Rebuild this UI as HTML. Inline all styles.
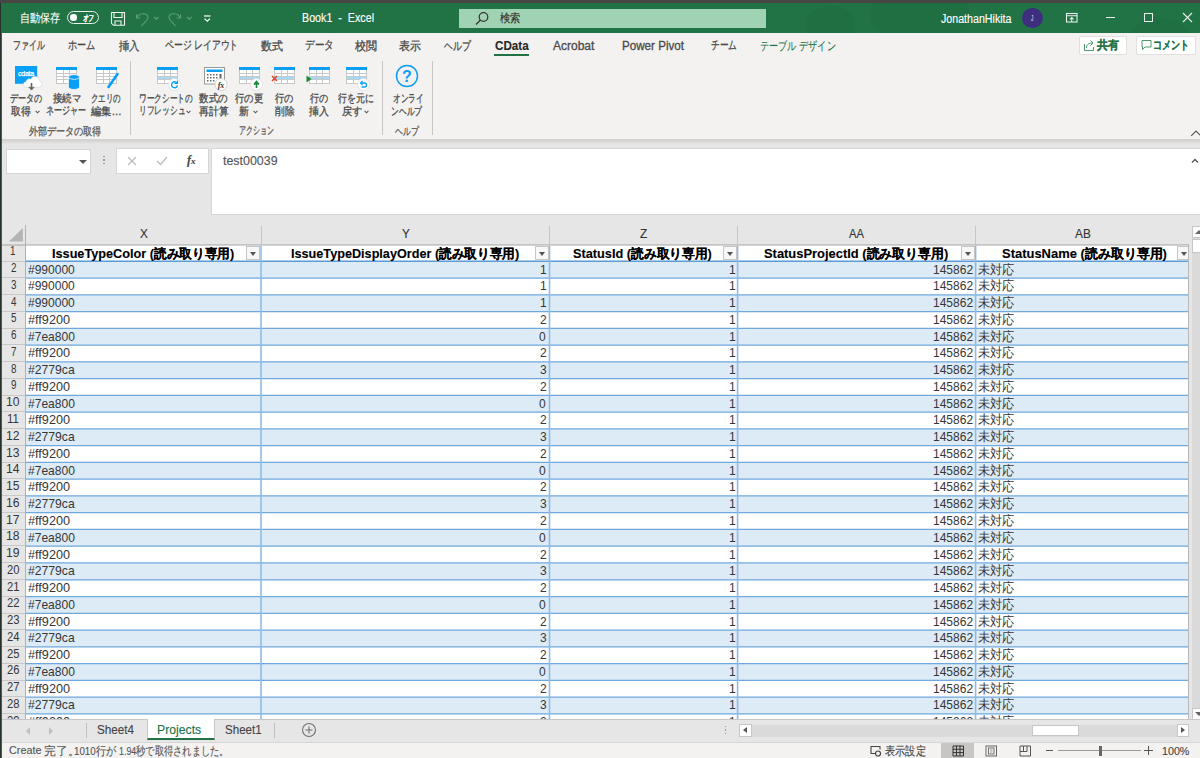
<!DOCTYPE html><html><head><meta charset="utf-8"><style>
*{box-sizing:border-box;margin:0;padding:0}
html,body{width:1200px;height:758px;overflow:hidden;background:#f3f2f1}
body{position:relative;font-family:"Liberation Sans",sans-serif;color:#262626}
.a{position:absolute;white-space:nowrap;-webkit-text-stroke:0.12px currentColor}
.sep{position:absolute;top:61px;width:1px;height:74px;background:#c8c6c4}
.dd{position:absolute;width:14px;height:14px;background:#f7f7f7;border:1px solid #c6c6c6}
.dd:after{content:"";position:absolute;left:3px;top:5px;border-left:3.5px solid transparent;border-right:3.5px solid transparent;border-top:4px solid #555}
</style></head><body>
<div class="a" style="left:0;top:3px;width:1200px;height:29.5px;background:#217346;overflow:hidden"><div class="a" style="left:805px;top:2px;width:50px;height:40px;border-radius:50%;background:rgba(0,0,0,0.03)"></div><div class="a" style="left:870px;top:-25px;width:100px;height:70px;border-radius:50%;background:rgba(0,0,0,0.03)"></div><div class="a" style="left:1130px;top:15px;width:60px;height:40px;border-radius:50%;background:rgba(0,0,0,0.03)"></div></div>
<div class="a" style="left:20.46px;top:8.85px;font-size:12px;line-height:19.20px;transform:scaleX(0.8383);transform-origin:0 0;color:#fff;">自動保存</div>
<div class="a" style="left:67.1px;top:10.9px;width:31.9px;height:13.6px;border:1.3px solid #e8f1ec;border-radius:7px"></div>
<div class="a" style="left:70.2px;top:14.1px;width:6.6px;height:6.6px;border-radius:50%;background:#fff"></div>
<div class="a" style="left:82.90px;top:11.15px;font-size:9px;line-height:14.40px;transform:scaleX(0.5842);transform-origin:0 0;color:#fff;font-style:italic;font-weight:bold">オフ</div>
<svg class="a" style="left:105px;top:6px" width="110" height="24" viewBox="0 0 110 24"><g fill="none" stroke="#eef3ef" stroke-width="1.1"><path d="M6.5 6.5H19.5V19.3H8.5L6.5 17.3Z"/><path d="M9 6.5V11.5H17V6.5M10 19.3V15H16V19.3"/></g><g fill="none" stroke="#5f9e7b" stroke-width="1.1"><path d="M31.5 8.3V12H35.3"/><path d="M31.8 11.8C33.5 7 43 6 43 11.5C43 13.5 41 15.5 36.5 19.8"/><path d="M49 11l2.25 2.25l2.25-2.25"/><path d="M75.5 8.3V12H71.7"/><path d="M75.2 11.8C73.5 7 64 6 64 11.5C64 13.5 66 15.5 70.5 19.8"/><path d="M82 11l2.25 2.25l2.25-2.25"/></g><g fill="none" stroke="#fff" stroke-width="1.2"><path d="M99 10h6.5"/><path d="M99.5 12.6l2.75 2.6l2.75-2.6"/></g></svg>
<div class="a" style="left:301.70px;top:9.45px;font-size:12px;line-height:19.20px;transform:scaleX(0.8926);transform-origin:0 0;color:#fff;">Book1&nbsp; -&nbsp; Excel</div>
<div class="a" style="left:459px;top:9px;width:307px;height:18.5px;background:#a0d2b4"></div>
<svg class="a" style="left:474px;top:11px" width="16" height="16" viewBox="0 0 16 16"><circle cx="9.5" cy="6" r="4.3" fill="none" stroke="#333" stroke-width="1.2"/><path d="M6.5 9l-4.5 4.5" stroke="#333" stroke-width="1.3"/></svg>
<div class="a" style="left:500.00px;top:8.80px;font-size:12px;line-height:19.20px;transform:scaleX(0.8542);transform-origin:0 0;color:#333;">検索</div>
<div class="a" style="left:941.00px;top:9.50px;font-size:12px;line-height:19.20px;transform:scaleX(0.8875);transform-origin:0 0;color:#fff;">JonathanHikita</div>
<div class="a" style="left:1022.2px;top:8.1px;width:20.4px;height:20.4px;border-radius:50%;background:#3d2f7e"></div>
<div class="a" style="left:1031.20px;top:11.25px;font-size:9px;line-height:14.40px;transform:scaleX(0.5200);transform-origin:0 0;color:#ddd;">J</div>
<svg class="a" style="left:1065px;top:12px" width="14" height="12" viewBox="0 0 14 12"><rect x="1.5" y="1.5" width="10.5" height="8.5" fill="none" stroke="#e8f0eb" stroke-width="1.1"/><path d="M1.5 3.8h10.5M6.75 10v-4.5M4.9 7.4l1.85-1.85 1.85 1.85" fill="none" stroke="#e8f0eb" stroke-width="1.05"/></svg>
<div class="a" style="left:1105.7px;top:17.3px;width:9.2px;height:1.1px;background:#e8f0eb"></div>
<div class="a" style="left:1144.3px;top:13.4px;width:8.8px;height:8.6px;border:1.1px solid #e8f0eb"></div>
<svg class="a" style="left:1182px;top:12px" width="11" height="11" viewBox="0 0 11 11"><path d="M1 1l9 9M10 1l-9 9" stroke="#e8f0eb" stroke-width="1.1"/></svg>
<div class="a" style="left:12.64px;top:36.05px;font-size:12px;line-height:19.20px;transform:scaleX(0.6574);transform-origin:0 0;color:#4a4a4a;-webkit-text-stroke:0.3px currentColor;">ファイル</div>
<div class="a" style="left:68.30px;top:36.05px;font-size:12px;line-height:19.20px;transform:scaleX(0.7639);transform-origin:0 0;color:#4a4a4a;-webkit-text-stroke:0.3px currentColor;">ホーム</div>
<div class="a" style="left:119.20px;top:36.55px;font-size:12px;line-height:19.20px;transform:scaleX(0.8667);transform-origin:0 0;color:#4a4a4a;-webkit-text-stroke:0.3px currentColor;">挿入</div>
<div class="a" style="left:164.50px;top:36.05px;font-size:12px;line-height:19.20px;transform:scaleX(0.7371);transform-origin:0 0;color:#4a4a4a;-webkit-text-stroke:0.3px currentColor;">ページ レイアウト</div>
<div class="a" style="left:261.00px;top:36.55px;font-size:12px;line-height:19.20px;transform:scaleX(0.9167);transform-origin:0 0;color:#4a4a4a;-webkit-text-stroke:0.3px currentColor;">数式</div>
<div class="a" style="left:305.00px;top:36.05px;font-size:12px;line-height:19.20px;transform:scaleX(0.7941);transform-origin:0 0;color:#4a4a4a;-webkit-text-stroke:0.3px currentColor;">データ</div>
<div class="a" style="left:355.00px;top:36.55px;font-size:12px;line-height:19.20px;transform:scaleX(0.9167);transform-origin:0 0;color:#4a4a4a;-webkit-text-stroke:0.3px currentColor;">校閲</div>
<div class="a" style="left:399.00px;top:36.55px;font-size:12px;line-height:19.20px;transform:scaleX(0.9167);transform-origin:0 0;color:#4a4a4a;-webkit-text-stroke:0.3px currentColor;">表示</div>
<div class="a" style="left:444.00px;top:37.05px;font-size:12px;line-height:19.20px;transform:scaleX(0.7378);transform-origin:0 0;color:#4a4a4a;-webkit-text-stroke:0.3px currentColor;">ヘルプ</div>
<div class="a" style="left:494.75px;top:37.40px;font-size:12px;line-height:19.20px;transform:scaleX(0.9700);transform-origin:0 0;color:#262626;font-weight:bold">CData</div>
<div class="a" style="left:494px;top:53.5px;width:35px;height:2.5px;background:#217346"></div>
<div class="a" style="left:553.00px;top:37.40px;font-size:12px;line-height:19.20px;color:#4a4a4a;-webkit-text-stroke:0.3px currentColor;">Acrobat</div>
<div class="a" style="left:622.00px;top:37.40px;font-size:12px;line-height:19.20px;transform:scaleX(0.9692);transform-origin:0 0;color:#4a4a4a;-webkit-text-stroke:0.3px currentColor;">Power Pivot</div>
<div class="a" style="left:711.00px;top:36.05px;font-size:12px;line-height:19.20px;transform:scaleX(0.7222);transform-origin:0 0;color:#4a4a4a;-webkit-text-stroke:0.3px currentColor;">チーム</div>
<div class="a" style="left:760.24px;top:36.55px;font-size:12px;line-height:19.20px;transform:scaleX(0.7629);transform-origin:0 0;color:#217346;">テーブル デザイン</div>
<div class="a" style="left:1078.5px;top:36px;width:48.5px;height:18.5px;background:#fff;border:1px solid #e1dfdd;border-radius:2px"></div>
<svg class="a" style="left:1083px;top:38px" width="12" height="14" viewBox="0 0 12 14"><path d="M1.5 6v6.5h9V9" fill="none" stroke="#3a8a5e" stroke-width="0.9"/><path d="M3.5 10c0-4 3-5 6-5M7.5 2.5l2.5 2.5-2.5 2.5" fill="none" stroke="#3a8a5e" stroke-width="0.9"/></svg>
<div class="a" style="left:1097.00px;top:36.25px;font-size:12px;line-height:19.20px;transform:scaleX(0.9167);transform-origin:0 0;color:#217346;font-weight:bold">共有</div>
<div class="a" style="left:1135.5px;top:36px;width:60.5px;height:18.5px;background:#fff;border:1px solid #e1dfdd;border-radius:2px"></div>
<svg class="a" style="left:1141px;top:39px" width="11" height="12" viewBox="0 0 11 12"><path d="M1 1.5h9v6.5h-6l-2.5 2.5v-2.5h-0.5z" fill="none" stroke="#3a8a5e" stroke-width="0.9"/></svg>
<div class="a" style="left:1153.24px;top:35.75px;font-size:12px;line-height:19.20px;transform:scaleX(0.7556);transform-origin:0 0;color:#217346;font-weight:bold">コメント</div>
<svg class="a" style="left:10px;top:60px" width="40" height="35" viewBox="0 0 40 35"><rect x="5" y="6" width="22.2" height="17.8" fill="#0aa0f5"/><text x="16" y="16.3" font-size="7" fill="#fff" text-anchor="middle" font-family="Liberation Sans" letter-spacing="-0.2" stroke="#fff" stroke-width="0.25">cdata</text><path d="M15.5 27.3h13.5a3.3 3.3 0 0 0 0.5-6.5a4.6 4.6 0 0 0 -8.8-1.6a3.2 3.2 0 0 0 -4.7 2.6a2.8 2.8 0 0 0 -0.5 5.5z" fill="#fff" stroke="#d8d8d8" stroke-width="0.7"/><path d="M21.5 23v6.5" stroke="#666" stroke-width="1.6"/><path d="M18.8 27.2l2.7 2.9 2.7-2.9z" fill="#666" stroke="#666" stroke-width="0.6"/></svg>
<svg class="a" style="left:56px;top:67px" width="21" height="17" viewBox="0 0 21 17"><rect x="0.5" y="0.5" width="20" height="16" fill="#fff" stroke="#c8c8c8"/><rect x="0" y="0" width="21" height="3" fill="#0a9ff5"/><path d="M0.5 6.5h20" stroke="#c8c8c8" stroke-width="1"/><path d="M0.5 9.5h20" stroke="#c8c8c8" stroke-width="1"/><path d="M0.5 12.5h20" stroke="#c8c8c8" stroke-width="1"/><path d="M7.5 3v13.5" stroke="#c8c8c8" stroke-width="1"/><path d="M13.5 3v13.5" stroke="#c8c8c8" stroke-width="1"/></svg>
<svg class="a" style="left:68px;top:74px" width="12" height="16" viewBox="0 0 12 16"><path d="M0.5 3v10c0 1.5 2.5 2.5 5.5 2.5s5.5-1 5.5-2.5v-10z" fill="#0a9ff5" stroke="#f3f2f1" stroke-width="0.8"/><ellipse cx="6" cy="3" rx="5.5" ry="2.3" fill="#0a9ff5" stroke="#f3f2f1" stroke-width="0.8"/></svg>
<svg class="a" style="left:96px;top:67px" width="21" height="17" viewBox="0 0 21 17"><rect x="0.5" y="0.5" width="20" height="16" fill="#fff" stroke="#c8c8c8"/><rect x="0" y="0" width="21" height="3" fill="#0a9ff5"/><path d="M0.5 6.5h20" stroke="#c8c8c8" stroke-width="1"/><path d="M0.5 9.5h20" stroke="#c8c8c8" stroke-width="1"/><path d="M0.5 12.5h20" stroke="#c8c8c8" stroke-width="1"/><path d="M7.5 3v13.5" stroke="#c8c8c8" stroke-width="1"/><path d="M13.5 3v13.5" stroke="#c8c8c8" stroke-width="1"/></svg>
<svg class="a" style="left:106px;top:72px" width="14" height="17" viewBox="0 0 14 17"><path d="M11.5 2l-9 13" stroke="#0a9ff5" stroke-width="2.6" stroke-linecap="round"/></svg>
<div class="a" style="left:9.90px;top:90.25px;font-size:11px;line-height:17.60px;transform:scaleX(0.7341);transform-origin:0 0;color:#4a4a4a;-webkit-text-stroke:0.3px currentColor;">データの</div>
<div class="a" style="left:10.70px;top:102.60px;font-size:11px;line-height:17.60px;transform:scaleX(0.8955);transform-origin:0 0;color:#4a4a4a;-webkit-text-stroke:0.3px currentColor;">取得</div>
<svg class="a" style="left:35.3px;top:109.5px" width="5" height="4" viewBox="0 0 5 4"><path d="M0.6 0.9l1.9 1.9 1.9-1.9" fill="none" stroke="#555" stroke-width="1.05"/></svg>
<div class="a" style="left:52.90px;top:90.25px;font-size:11px;line-height:17.60px;transform:scaleX(0.8594);transform-origin:0 0;color:#4a4a4a;-webkit-text-stroke:0.3px currentColor;">接続マ</div>
<div class="a" style="left:45.60px;top:102.10px;font-size:11px;line-height:17.60px;transform:scaleX(0.7255);transform-origin:0 0;color:#4a4a4a;-webkit-text-stroke:0.3px currentColor;">ネージャー</div>
<div class="a" style="left:91.02px;top:89.75px;font-size:11px;line-height:17.60px;transform:scaleX(0.6791);transform-origin:0 0;color:#4a4a4a;-webkit-text-stroke:0.3px currentColor;">クエリの</div>
<div class="a" style="left:91.10px;top:102.60px;font-size:11px;line-height:17.60px;transform:scaleX(0.9313);transform-origin:0 0;color:#4a4a4a;-webkit-text-stroke:0.3px currentColor;">編集…</div>
<div class="a" style="left:28.70px;top:122.95px;font-size:11px;line-height:17.60px;transform:scaleX(0.8239);transform-origin:0 0;color:#5a5a5a;-webkit-text-stroke:0.3px currentColor;">外部データの取得</div>
<div class="sep" style="left:130px"></div>
<svg class="a" style="left:156.5px;top:67px" width="21" height="17" viewBox="0 0 21 17"><rect x="0.5" y="0.5" width="20" height="16" fill="#fff" stroke="#c8c8c8"/><rect x="0" y="0" width="21" height="3" fill="#0a9ff5"/><rect x="1" y="9.5" width="19" height="3" fill="#a0dcfc"/><path d="M0.5 6.5h20" stroke="#c8c8c8" stroke-width="1"/><path d="M0.5 9.5h20" stroke="#c8c8c8" stroke-width="1"/><path d="M0.5 12.5h20" stroke="#c8c8c8" stroke-width="1"/><path d="M7.5 3v13.5" stroke="#c8c8c8" stroke-width="1"/><path d="M13.5 3v13.5" stroke="#c8c8c8" stroke-width="1"/></svg>
<svg class="a" style="left:168px;top:78px" width="13" height="13" viewBox="0 0 13 13"><circle cx="6.5" cy="6.5" r="6" fill="#fff" stroke="#ddd" stroke-width="0.8"/><path d="M9 5a3 3 0 1 0 0.5 2.5" fill="none" stroke="#0a9ff5" stroke-width="1.4"/><path d="M9.5 2.5v3h-3" fill="none" stroke="#0a9ff5" stroke-width="1.2"/></svg>
<svg class="a" style="left:203.5px;top:66.5px" width="26" height="25" viewBox="0 0 26 25"><rect x="0.5" y="0.5" width="20" height="16.5" fill="#fff" stroke="#999"/><rect x="2.5" y="2.5" width="16" height="2.5" fill="#0a9ff5"/><g fill="#666"><rect x="3" y="7" width="1.5" height="1.5"/><rect x="6" y="7" width="1.5" height="1.5"/><rect x="9" y="7" width="1.5" height="1.5"/><rect x="12" y="7" width="1.5" height="1.5"/><rect x="15.5" y="7" width="2" height="5"/><rect x="3" y="10" width="1.5" height="1.5"/><rect x="6" y="10" width="1.5" height="1.5"/><rect x="9" y="10" width="1.5" height="1.5"/><rect x="12" y="10" width="1.5" height="1.5"/><rect x="3" y="13" width="1.5" height="1.5"/><rect x="6" y="13" width="1.5" height="1.5"/><rect x="9" y="13" width="1.5" height="1.5"/></g><circle cx="17" cy="17.5" r="6" fill="#fff" stroke="#ccc" stroke-width="0.8"/><text x="17" y="20.5" font-size="8" font-style="italic" fill="#333" text-anchor="middle" font-family="Liberation Serif" font-weight="bold">fx</text></svg>
<svg class="a" style="left:238.75px;top:67px" width="21" height="17" viewBox="0 0 21 17"><rect x="0.5" y="0.5" width="20" height="16" fill="#fff" stroke="#c8c8c8"/><rect x="0" y="0" width="21" height="3" fill="#0a9ff5"/><rect x="1" y="9.5" width="19" height="3" fill="#a0dcfc"/><path d="M0.5 6.5h20" stroke="#c8c8c8" stroke-width="1"/><path d="M0.5 9.5h20" stroke="#c8c8c8" stroke-width="1"/><path d="M0.5 12.5h20" stroke="#c8c8c8" stroke-width="1"/><path d="M7.5 3v13.5" stroke="#c8c8c8" stroke-width="1"/><path d="M13.5 3v13.5" stroke="#c8c8c8" stroke-width="1"/></svg>
<svg class="a" style="left:249.5px;top:77.5px" width="13" height="13" viewBox="0 0 13 13"><circle cx="6.5" cy="6.5" r="6" fill="#fff" stroke="#ddd" stroke-width="0.8"/><path d="M6.5 10v-6M4 6.5l2.5-3 2.5 3" fill="#1a8a3a" stroke="#1a8a3a" stroke-width="1.6"/></svg>
<svg class="a" style="left:274.25px;top:67px" width="21" height="17" viewBox="0 0 21 17"><rect x="0.5" y="0.5" width="20" height="16" fill="#fff" stroke="#c8c8c8"/><rect x="0" y="0" width="21" height="3" fill="#0a9ff5"/><rect x="1" y="9.5" width="19" height="3" fill="#a0dcfc"/><path d="M0.5 6.5h20" stroke="#c8c8c8" stroke-width="1"/><path d="M0.5 9.5h20" stroke="#c8c8c8" stroke-width="1"/><path d="M0.5 12.5h20" stroke="#c8c8c8" stroke-width="1"/><path d="M7.5 3v13.5" stroke="#c8c8c8" stroke-width="1"/><path d="M13.5 3v13.5" stroke="#c8c8c8" stroke-width="1"/></svg>
<svg class="a" style="left:271px;top:75px" width="7" height="7" viewBox="0 0 7 7"><path d="M1 1l5 5M6 1l-5 5" stroke="#e0401c" stroke-width="1.5"/></svg>
<svg class="a" style="left:309.2px;top:67px" width="21" height="17" viewBox="0 0 21 17"><rect x="0.5" y="0.5" width="20" height="16" fill="#fff" stroke="#c8c8c8"/><rect x="0" y="0" width="21" height="3" fill="#0a9ff5"/><rect x="1" y="9.5" width="19" height="3" fill="#a0dcfc"/><path d="M0.5 6.5h20" stroke="#c8c8c8" stroke-width="1"/><path d="M0.5 9.5h20" stroke="#c8c8c8" stroke-width="1"/><path d="M0.5 12.5h20" stroke="#c8c8c8" stroke-width="1"/><path d="M7.5 3v13.5" stroke="#c8c8c8" stroke-width="1"/><path d="M13.5 3v13.5" stroke="#c8c8c8" stroke-width="1"/></svg>
<svg class="a" style="left:305.5px;top:74.5px" width="6" height="8" viewBox="0 0 6 8"><path d="M0.5 0.5l5 3.5-5 3.5z" fill="#1a8a3a"/></svg>
<svg class="a" style="left:346.25px;top:67px" width="21" height="17" viewBox="0 0 21 17"><rect x="0.5" y="0.5" width="20" height="16" fill="#fff" stroke="#c8c8c8"/><rect x="0" y="0" width="21" height="3" fill="#0a9ff5"/><rect x="1" y="9.5" width="19" height="3" fill="#a0dcfc"/><path d="M0.5 6.5h20" stroke="#c8c8c8" stroke-width="1"/><path d="M0.5 9.5h20" stroke="#c8c8c8" stroke-width="1"/><path d="M0.5 12.5h20" stroke="#c8c8c8" stroke-width="1"/><path d="M7.5 3v13.5" stroke="#c8c8c8" stroke-width="1"/><path d="M13.5 3v13.5" stroke="#c8c8c8" stroke-width="1"/></svg>
<svg class="a" style="left:357px;top:78px" width="13" height="13" viewBox="0 0 13 13"><circle cx="6.5" cy="6.5" r="6" fill="#fff" stroke="#ddd" stroke-width="0.8"/><path d="M4 5h3.5a2 2 0 0 1 0 4h-3" fill="none" stroke="#0a9ff5" stroke-width="1.3"/><path d="M5.5 3l-2 2 2 2" fill="none" stroke="#0a9ff5" stroke-width="1.2"/></svg>
<svg class="a" style="left:395px;top:64px" width="24" height="24" viewBox="0 0 24 24"><circle cx="12" cy="12" r="10.5" fill="none" stroke="#0a9ff5" stroke-width="1.5"/><text x="12" y="18" font-size="16" font-weight="bold" fill="#0a9ff5" text-anchor="middle" font-family="Liberation Sans">?</text></svg>
<div class="a" style="left:139.00px;top:89.75px;font-size:11px;line-height:17.60px;transform:scaleX(0.6980);transform-origin:0 0;color:#4a4a4a;-webkit-text-stroke:0.3px currentColor;">ワークシートの</div>
<div class="a" style="left:138.84px;top:102.10px;font-size:11px;line-height:17.60px;transform:scaleX(0.7040);transform-origin:0 0;color:#4a4a4a;-webkit-text-stroke:0.3px currentColor;">リフレッシュ</div>
<svg class="a" style="left:185.8px;top:109.5px" width="5" height="4" viewBox="0 0 5 4"><path d="M0.6 0.9l1.9 1.9 1.9-1.9" fill="none" stroke="#555" stroke-width="1.05"/></svg>
<div class="a" style="left:199.20px;top:90.25px;font-size:11px;line-height:17.60px;transform:scaleX(0.8652);transform-origin:0 0;color:#4a4a4a;-webkit-text-stroke:0.3px currentColor;">数式の</div>
<div class="a" style="left:198.90px;top:103.10px;font-size:11px;line-height:17.60px;transform:scaleX(0.8909);transform-origin:0 0;color:#4a4a4a;-webkit-text-stroke:0.3px currentColor;">再計算</div>
<div class="a" style="left:234.75px;top:90.25px;font-size:11px;line-height:17.60px;transform:scaleX(0.8485);transform-origin:0 0;color:#4a4a4a;-webkit-text-stroke:0.3px currentColor;">行の更</div>
<div class="a" style="left:238.80px;top:103.10px;font-size:11px;line-height:17.60px;transform:scaleX(0.9045);transform-origin:0 0;color:#4a4a4a;-webkit-text-stroke:0.3px currentColor;">新</div>
<svg class="a" style="left:252.9px;top:109.5px" width="5" height="4" viewBox="0 0 5 4"><path d="M0.6 0.9l1.9 1.9 1.9-1.9" fill="none" stroke="#555" stroke-width="1.05"/></svg>
<div class="a" style="left:274.90px;top:90.25px;font-size:11px;line-height:17.60px;transform:scaleX(0.8364);transform-origin:0 0;color:#4a4a4a;-webkit-text-stroke:0.3px currentColor;">行の</div>
<div class="a" style="left:274.60px;top:102.60px;font-size:11px;line-height:17.60px;transform:scaleX(0.8818);transform-origin:0 0;color:#4a4a4a;-webkit-text-stroke:0.3px currentColor;">削除</div>
<div class="a" style="left:310.30px;top:90.25px;font-size:11px;line-height:17.60px;transform:scaleX(0.8273);transform-origin:0 0;color:#4a4a4a;-webkit-text-stroke:0.3px currentColor;">行の</div>
<div class="a" style="left:309.20px;top:102.60px;font-size:11px;line-height:17.60px;transform:scaleX(0.9000);transform-origin:0 0;color:#4a4a4a;-webkit-text-stroke:0.3px currentColor;">挿入</div>
<div class="a" style="left:338.40px;top:90.25px;font-size:11px;line-height:17.60px;transform:scaleX(0.8114);transform-origin:0 0;color:#4a4a4a;-webkit-text-stroke:0.3px currentColor;">行を元に</div>
<div class="a" style="left:342.20px;top:102.60px;font-size:11px;line-height:17.60px;transform:scaleX(0.9318);transform-origin:0 0;color:#4a4a4a;-webkit-text-stroke:0.3px currentColor;">戻す</div>
<svg class="a" style="left:364.4px;top:109.5px" width="5" height="4" viewBox="0 0 5 4"><path d="M0.6 0.9l1.9 1.9 1.9-1.9" fill="none" stroke="#555" stroke-width="1.05"/></svg>
<div class="a" style="left:238.76px;top:122.45px;font-size:11px;line-height:17.60px;transform:scaleX(0.6407);transform-origin:0 0;color:#5a5a5a;-webkit-text-stroke:0.3px currentColor;">アクション</div>
<div class="sep" style="left:382.3px"></div>
<div class="a" style="left:392.50px;top:89.75px;font-size:11px;line-height:17.60px;transform:scaleX(0.6907);transform-origin:0 0;color:#4a4a4a;-webkit-text-stroke:0.3px currentColor;">オンライ</div>
<div class="a" style="left:391.09px;top:103.10px;font-size:11px;line-height:17.60px;transform:scaleX(0.7091);transform-origin:0 0;color:#4a4a4a;-webkit-text-stroke:0.3px currentColor;">ンヘルプ</div>
<div class="a" style="left:394.60px;top:123.25px;font-size:11px;line-height:17.60px;transform:scaleX(0.7088);transform-origin:0 0;color:#5a5a5a;-webkit-text-stroke:0.3px currentColor;">ヘルプ</div>
<div class="sep" style="left:431.7px"></div>
<svg class="a" style="left:1190px;top:129px" width="12" height="8" viewBox="0 0 12 8"><path d="M1.2 6.8l4.8-4.8 4.8 4.8" fill="none" stroke="#555" stroke-width="1.2"/></svg>
<div class="a" style="left:0;top:139px;width:1200px;height:619px;background:#e6e6e6"></div>
<div class="a" style="left:0;top:139px;width:1200px;height:5px;background:linear-gradient(#d2d1cf,#d6d5d4 40%,#e6e6e6)"></div>
<div class="a" style="left:6px;top:148.5px;width:85px;height:25.5px;background:#fff;border:1px solid #d6d6d6"></div>
<div class="a" style="left:79px;top:159.5px;border-left:4px solid transparent;border-right:4px solid transparent;border-top:4px solid #555"></div>
<div class="a" style="left:103px;top:156px;width:1.5px;height:10px;background:repeating-linear-gradient(#999 0 1.5px,transparent 1.5px 3.5px)"></div>
<div class="a" style="left:116.3px;top:148.3px;width:92.5px;height:25.5px;background:#fff;border:1px solid #d6d6d6"></div>
<svg class="a" style="left:127px;top:156px" width="10" height="10" viewBox="0 0 10 10"><path d="M1 1l8 8M9 1l-8 8" stroke="#bbb" stroke-width="1.1"/></svg>
<svg class="a" style="left:156px;top:156px" width="12" height="10" viewBox="0 0 12 10"><path d="M1 5l3.5 3.5 6.5-7.5" fill="none" stroke="#bbb" stroke-width="1.3"/></svg>
<div class="a" style="left:187px;top:152px;font-family:'Liberation Serif',serif;font-style:italic;font-weight:bold;font-size:12px;line-height:16px;color:#444">f<span style="font-size:9px">x</span></div>
<div class="a" style="left:211.3px;top:148.3px;width:990px;height:67px;background:#fff;border:1px solid #d6d6d6;border-right:none"></div>
<div class="a" style="left:222.50px;top:150.80px;font-size:13px;line-height:20.80px;transform:scaleX(0.9561);transform-origin:0 0;color:#555;">test00039</div>
<svg class="a" style="left:1191.3px;top:156.5px" width="8" height="7" viewBox="0 0 8 7"><path d="M1 5.5l3-3 3 3" fill="none" stroke="#555" stroke-width="1.4"/></svg>
<div class="a" style="left:2px;top:225px;width:1186.5px;height:21px;background:#e6e6e6;border-bottom:2px solid #c4c4c4"></div>
<svg class="a" style="left:0;top:222px" width="30" height="24" viewBox="0 0 30 24"><path d="M22.9 6.1V19.6H9z" fill="#b4b4b4"/></svg>
<div class="a" style="left:25.0px;top:226px;width:1px;height:18.4px;background:#c6c6c6"></div>
<div class="a" style="left:260.5px;top:226px;width:1px;height:18.4px;background:#c6c6c6"></div>
<div class="a" style="left:549.0px;top:226px;width:1px;height:18.4px;background:#c6c6c6"></div>
<div class="a" style="left:737.1px;top:226px;width:1px;height:18.4px;background:#c6c6c6"></div>
<div class="a" style="left:975.1px;top:226px;width:1px;height:18.4px;background:#c6c6c6"></div>
<div class="a" style="left:2px;top:246px;width:23.5px;height:473px;background:#e6e6e6"></div>
<div class="a" style="left:26px;top:244px;width:1162.5px;height:475px;background:#fff;overflow:hidden;clip-path:inset(1.8px 0 0 0)">
<svg class="a" style="left:0;top:0" width="1162.5" height="475.0"><rect x="0" y="17.31" width="1200" height="16.76" fill="#ddebf7"/><rect x="0" y="50.83" width="1200" height="16.76" fill="#ddebf7"/><rect x="0" y="84.35" width="1200" height="16.76" fill="#ddebf7"/><rect x="0" y="117.87" width="1200" height="16.76" fill="#ddebf7"/><rect x="0" y="151.39" width="1200" height="16.76" fill="#ddebf7"/><rect x="0" y="184.91" width="1200" height="16.76" fill="#ddebf7"/><rect x="0" y="218.43" width="1200" height="16.76" fill="#ddebf7"/><rect x="0" y="251.95" width="1200" height="16.76" fill="#ddebf7"/><rect x="0" y="285.47" width="1200" height="16.76" fill="#ddebf7"/><rect x="0" y="318.99" width="1200" height="16.76" fill="#ddebf7"/><rect x="0" y="352.51" width="1200" height="16.76" fill="#ddebf7"/><rect x="0" y="386.03" width="1200" height="16.76" fill="#ddebf7"/><rect x="0" y="419.55" width="1200" height="16.76" fill="#ddebf7"/><rect x="0" y="453.07" width="1200" height="16.76" fill="#ddebf7"/><path d="M0 17.31H1200" stroke="#5b9bd5" stroke-width="1.6"/><path d="M0 34.07H1200" stroke="#6fa8dc" stroke-width="1.25"/><path d="M0 50.83H1200" stroke="#6fa8dc" stroke-width="1.25"/><path d="M0 67.59H1200" stroke="#6fa8dc" stroke-width="1.25"/><path d="M0 84.35H1200" stroke="#6fa8dc" stroke-width="1.25"/><path d="M0 101.11H1200" stroke="#6fa8dc" stroke-width="1.25"/><path d="M0 117.87H1200" stroke="#6fa8dc" stroke-width="1.25"/><path d="M0 134.63H1200" stroke="#6fa8dc" stroke-width="1.25"/><path d="M0 151.39H1200" stroke="#6fa8dc" stroke-width="1.25"/><path d="M0 168.15H1200" stroke="#6fa8dc" stroke-width="1.25"/><path d="M0 184.91H1200" stroke="#6fa8dc" stroke-width="1.25"/><path d="M0 201.67H1200" stroke="#6fa8dc" stroke-width="1.25"/><path d="M0 218.43H1200" stroke="#6fa8dc" stroke-width="1.25"/><path d="M0 235.19H1200" stroke="#6fa8dc" stroke-width="1.25"/><path d="M0 251.95H1200" stroke="#6fa8dc" stroke-width="1.25"/><path d="M0 268.71H1200" stroke="#6fa8dc" stroke-width="1.25"/><path d="M0 285.47H1200" stroke="#6fa8dc" stroke-width="1.25"/><path d="M0 302.23H1200" stroke="#6fa8dc" stroke-width="1.25"/><path d="M0 318.99H1200" stroke="#6fa8dc" stroke-width="1.25"/><path d="M0 335.75H1200" stroke="#6fa8dc" stroke-width="1.25"/><path d="M0 352.51H1200" stroke="#6fa8dc" stroke-width="1.25"/><path d="M0 369.27H1200" stroke="#6fa8dc" stroke-width="1.25"/><path d="M0 386.03H1200" stroke="#6fa8dc" stroke-width="1.25"/><path d="M0 402.79H1200" stroke="#6fa8dc" stroke-width="1.25"/><path d="M0 419.55H1200" stroke="#6fa8dc" stroke-width="1.25"/><path d="M0 436.31H1200" stroke="#6fa8dc" stroke-width="1.25"/><path d="M0 453.07H1200" stroke="#6fa8dc" stroke-width="1.25"/><path d="M0 469.83H1200" stroke="#6fa8dc" stroke-width="1.25"/><path d="M0 486.59H1200" stroke="#6fa8dc" stroke-width="1.25"/><path d="M235.00 0V500" stroke="#8fbbe6" stroke-width="1.6"/><path d="M523.50 0V500" stroke="#8fbbe6" stroke-width="1.6"/><path d="M711.60 0V500" stroke="#8fbbe6" stroke-width="1.6"/><path d="M949.60 0V500" stroke="#8fbbe6" stroke-width="1.6"/></svg>
</div>
<div class="a" style="left:2px;top:260.56px;width:23.5px;height:1px;background:#c8c8c8"></div>
<div class="a" style="left:2px;top:277.32px;width:23.5px;height:1px;background:#c8c8c8"></div>
<div class="a" style="left:2px;top:294.08px;width:23.5px;height:1px;background:#c8c8c8"></div>
<div class="a" style="left:2px;top:310.84px;width:23.5px;height:1px;background:#c8c8c8"></div>
<div class="a" style="left:2px;top:327.60px;width:23.5px;height:1px;background:#c8c8c8"></div>
<div class="a" style="left:2px;top:344.36px;width:23.5px;height:1px;background:#c8c8c8"></div>
<div class="a" style="left:2px;top:361.12px;width:23.5px;height:1px;background:#c8c8c8"></div>
<div class="a" style="left:2px;top:377.88px;width:23.5px;height:1px;background:#c8c8c8"></div>
<div class="a" style="left:2px;top:394.64px;width:23.5px;height:1px;background:#c8c8c8"></div>
<div class="a" style="left:2px;top:411.40px;width:23.5px;height:1px;background:#c8c8c8"></div>
<div class="a" style="left:2px;top:428.16px;width:23.5px;height:1px;background:#c8c8c8"></div>
<div class="a" style="left:2px;top:444.92px;width:23.5px;height:1px;background:#c8c8c8"></div>
<div class="a" style="left:2px;top:461.68px;width:23.5px;height:1px;background:#c8c8c8"></div>
<div class="a" style="left:2px;top:478.44px;width:23.5px;height:1px;background:#c8c8c8"></div>
<div class="a" style="left:2px;top:495.20px;width:23.5px;height:1px;background:#c8c8c8"></div>
<div class="a" style="left:2px;top:511.96px;width:23.5px;height:1px;background:#c8c8c8"></div>
<div class="a" style="left:2px;top:528.72px;width:23.5px;height:1px;background:#c8c8c8"></div>
<div class="a" style="left:2px;top:545.48px;width:23.5px;height:1px;background:#c8c8c8"></div>
<div class="a" style="left:2px;top:562.24px;width:23.5px;height:1px;background:#c8c8c8"></div>
<div class="a" style="left:2px;top:579.00px;width:23.5px;height:1px;background:#c8c8c8"></div>
<div class="a" style="left:2px;top:595.76px;width:23.5px;height:1px;background:#c8c8c8"></div>
<div class="a" style="left:2px;top:612.52px;width:23.5px;height:1px;background:#c8c8c8"></div>
<div class="a" style="left:2px;top:629.28px;width:23.5px;height:1px;background:#c8c8c8"></div>
<div class="a" style="left:2px;top:646.04px;width:23.5px;height:1px;background:#c8c8c8"></div>
<div class="a" style="left:2px;top:662.80px;width:23.5px;height:1px;background:#c8c8c8"></div>
<div class="a" style="left:2px;top:679.56px;width:23.5px;height:1px;background:#c8c8c8"></div>
<div class="a" style="left:2px;top:696.32px;width:23.5px;height:1px;background:#c8c8c8"></div>
<div class="a" style="left:2px;top:713.08px;width:23.5px;height:1px;background:#c8c8c8"></div>
<div class="a" style="left:2px;top:729.84px;width:23.5px;height:1px;background:#c8c8c8"></div>
<div class="a" style="left:24.7px;top:225px;width:1.6px;height:494px;background:#b0b0b0"></div>
<div class="a" style="left:139.78px;top:224.38px;font-size:13px;line-height:20.80px;transform:scaleX(0.9062);transform-origin:0 0;color:#333;">X</div>
<div class="a" style="left:401.62px;top:224.38px;font-size:13px;line-height:20.80px;transform:scaleX(0.9062);transform-origin:0 0;color:#333;">Y</div>
<div class="a" style="left:639.88px;top:224.38px;font-size:13px;line-height:20.80px;transform:scaleX(0.9062);transform-origin:0 0;color:#333;">Z</div>
<div class="a" style="left:848.85px;top:224.38px;font-size:13px;line-height:20.80px;transform:scaleX(0.8611);transform-origin:0 0;color:#333;">AA</div>
<div class="a" style="left:1075.25px;top:224.38px;font-size:13px;line-height:20.80px;transform:scaleX(0.9118);transform-origin:0 0;color:#333;">AB</div>
<div class="a" style="left:10.27px;top:241.40px;font-size:12.5px;line-height:20.00px;transform:scaleX(0.7833);transform-origin:0 0;color:#363636;-webkit-text-stroke:0;">1</div>
<div class="a" style="left:10.65px;top:258.16px;font-size:12.5px;line-height:20.00px;transform:scaleX(0.7857);transform-origin:0 0;color:#363636;-webkit-text-stroke:0;">2</div>
<div class="a" style="left:10.65px;top:274.92px;font-size:12.5px;line-height:20.00px;transform:scaleX(0.7857);transform-origin:0 0;color:#363636;-webkit-text-stroke:0;">3</div>
<div class="a" style="left:10.65px;top:291.68px;font-size:12.5px;line-height:20.00px;transform:scaleX(0.7857);transform-origin:0 0;color:#363636;-webkit-text-stroke:0;">4</div>
<div class="a" style="left:10.65px;top:308.44px;font-size:12.5px;line-height:20.00px;transform:scaleX(0.7857);transform-origin:0 0;color:#363636;-webkit-text-stroke:0;">5</div>
<div class="a" style="left:10.65px;top:325.20px;font-size:12.5px;line-height:20.00px;transform:scaleX(0.7857);transform-origin:0 0;color:#363636;-webkit-text-stroke:0;">6</div>
<div class="a" style="left:10.65px;top:341.96px;font-size:12.5px;line-height:20.00px;transform:scaleX(0.7857);transform-origin:0 0;color:#363636;-webkit-text-stroke:0;">7</div>
<div class="a" style="left:10.65px;top:358.72px;font-size:12.5px;line-height:20.00px;transform:scaleX(0.7857);transform-origin:0 0;color:#363636;-webkit-text-stroke:0;">8</div>
<div class="a" style="left:10.65px;top:375.48px;font-size:12.5px;line-height:20.00px;transform:scaleX(0.7857);transform-origin:0 0;color:#363636;-webkit-text-stroke:0;">9</div>
<div class="a" style="left:6.13px;top:392.24px;font-size:12.5px;line-height:20.00px;transform:scaleX(0.9692);transform-origin:0 0;color:#363636;-webkit-text-stroke:0;">10</div>
<div class="a" style="left:6.98px;top:409.00px;font-size:12.5px;line-height:20.00px;transform:scaleX(0.9167);transform-origin:0 0;color:#363636;-webkit-text-stroke:0;">11</div>
<div class="a" style="left:6.13px;top:425.76px;font-size:12.5px;line-height:20.00px;transform:scaleX(0.9692);transform-origin:0 0;color:#363636;-webkit-text-stroke:0;">12</div>
<div class="a" style="left:6.13px;top:442.52px;font-size:12.5px;line-height:20.00px;transform:scaleX(0.9692);transform-origin:0 0;color:#363636;-webkit-text-stroke:0;">13</div>
<div class="a" style="left:6.13px;top:459.28px;font-size:12.5px;line-height:20.00px;transform:scaleX(0.9692);transform-origin:0 0;color:#363636;-webkit-text-stroke:0;">14</div>
<div class="a" style="left:6.13px;top:476.04px;font-size:12.5px;line-height:20.00px;transform:scaleX(0.9692);transform-origin:0 0;color:#363636;-webkit-text-stroke:0;">15</div>
<div class="a" style="left:6.13px;top:492.80px;font-size:12.5px;line-height:20.00px;transform:scaleX(0.9692);transform-origin:0 0;color:#363636;-webkit-text-stroke:0;">16</div>
<div class="a" style="left:6.13px;top:509.56px;font-size:12.5px;line-height:20.00px;transform:scaleX(0.9692);transform-origin:0 0;color:#363636;-webkit-text-stroke:0;">17</div>
<div class="a" style="left:6.13px;top:526.32px;font-size:12.5px;line-height:20.00px;transform:scaleX(0.9692);transform-origin:0 0;color:#363636;-webkit-text-stroke:0;">18</div>
<div class="a" style="left:6.13px;top:543.08px;font-size:12.5px;line-height:20.00px;transform:scaleX(0.9692);transform-origin:0 0;color:#363636;-webkit-text-stroke:0;">19</div>
<div class="a" style="left:7.10px;top:559.84px;font-size:12.5px;line-height:20.00px;transform:scaleX(0.9000);transform-origin:0 0;color:#363636;-webkit-text-stroke:0;">20</div>
<div class="a" style="left:7.10px;top:576.60px;font-size:12.5px;line-height:20.00px;transform:scaleX(0.9000);transform-origin:0 0;color:#363636;-webkit-text-stroke:0;">21</div>
<div class="a" style="left:7.10px;top:593.36px;font-size:12.5px;line-height:20.00px;transform:scaleX(0.9000);transform-origin:0 0;color:#363636;-webkit-text-stroke:0;">22</div>
<div class="a" style="left:7.10px;top:610.12px;font-size:12.5px;line-height:20.00px;transform:scaleX(0.9000);transform-origin:0 0;color:#363636;-webkit-text-stroke:0;">23</div>
<div class="a" style="left:7.10px;top:626.88px;font-size:12.5px;line-height:20.00px;transform:scaleX(0.9000);transform-origin:0 0;color:#363636;-webkit-text-stroke:0;">24</div>
<div class="a" style="left:7.10px;top:643.64px;font-size:12.5px;line-height:20.00px;transform:scaleX(0.9000);transform-origin:0 0;color:#363636;-webkit-text-stroke:0;">25</div>
<div class="a" style="left:7.10px;top:660.40px;font-size:12.5px;line-height:20.00px;transform:scaleX(0.9000);transform-origin:0 0;color:#363636;-webkit-text-stroke:0;">26</div>
<div class="a" style="left:7.10px;top:677.16px;font-size:12.5px;line-height:20.00px;transform:scaleX(0.9000);transform-origin:0 0;color:#363636;-webkit-text-stroke:0;">27</div>
<div class="a" style="left:7.10px;top:693.92px;font-size:12.5px;line-height:20.00px;transform:scaleX(0.9000);transform-origin:0 0;color:#363636;-webkit-text-stroke:0;">28</div>
<div class="a" style="left:2px;top:713.6800000000001px;width:23px;height:5.319999999999936px;overflow:hidden">
<div class="a" style="left:5.10px;top:-3.00px;font-size:12.5px;line-height:20.00px;transform:scaleX(0.9000);transform-origin:0 0;color:#363636;-webkit-text-stroke:0;">29</div>
</div>
<div class="a" style="left:51.60px;top:244.00px;font-size:13px;line-height:20.80px;transform:scaleX(0.9754);transform-origin:0 0;color:#000;font-weight:bold">IssueTypeColor (読み取り専用)</div>
<div class="dd" style="left:246.0px;top:246.20px"></div>
<div class="a" style="left:290.50px;top:244.00px;font-size:13px;line-height:20.80px;transform:scaleX(0.9732);transform-origin:0 0;color:#000;font-weight:bold">IssueTypeDisplayOrder (読み取り専用)</div>
<div class="dd" style="left:534.5px;top:246.20px"></div>
<div class="a" style="left:573.30px;top:244.00px;font-size:13px;line-height:20.80px;transform:scaleX(0.9803);transform-origin:0 0;color:#000;font-weight:bold">StatusId (読み取り専用)</div>
<div class="dd" style="left:722.6px;top:246.20px"></div>
<div class="a" style="left:764.40px;top:244.00px;font-size:13px;line-height:20.80px;transform:scaleX(0.9925);transform-origin:0 0;color:#000;font-weight:bold">StatusProjectId (読み取り専用)</div>
<div class="dd" style="left:960.6px;top:246.20px"></div>
<div class="a" style="left:1001.60px;top:244.00px;font-size:13px;line-height:20.80px;transform:scaleX(0.9970);transform-origin:0 0;color:#000;font-weight:bold">StatusName (読み取り専用)</div>
<div class="a" style="left:1170px;top:245.40px;width:18.4px;height:16px;overflow:hidden"><div class="dd" style="left:7.20px;top:0.8px"></div></div>
<div class="a" style="left:28.00px;top:258.61px;font-size:13.5px;line-height:21.60px;transform:scaleX(0.8906);transform-origin:0 0;color:#363636;-webkit-text-stroke:0;">#990000</div>
<div class="a" style="left:540.27px;top:258.61px;font-size:13.5px;line-height:21.60px;transform:scaleX(0.8906);transform-origin:0 0;color:#363636;-webkit-text-stroke:0;">1</div>
<div class="a" style="left:728.57px;top:258.61px;font-size:13.5px;line-height:21.60px;transform:scaleX(0.8906);transform-origin:0 0;color:#363636;-webkit-text-stroke:0;">1</div>
<div class="a" style="left:932.92px;top:258.61px;font-size:13.5px;line-height:21.60px;transform:scaleX(0.8906);transform-origin:0 0;color:#363636;-webkit-text-stroke:0;">145862</div>
<div class="a" style="left:978.30px;top:259.61px;font-size:13px;line-height:20.80px;transform:scaleX(0.9410);transform-origin:0 0;color:#363636;-webkit-text-stroke:0;">未対応</div>
<div class="a" style="left:28.00px;top:275.37px;font-size:13.5px;line-height:21.60px;transform:scaleX(0.8906);transform-origin:0 0;color:#363636;-webkit-text-stroke:0;">#990000</div>
<div class="a" style="left:540.27px;top:275.37px;font-size:13.5px;line-height:21.60px;transform:scaleX(0.8906);transform-origin:0 0;color:#363636;-webkit-text-stroke:0;">1</div>
<div class="a" style="left:728.57px;top:275.37px;font-size:13.5px;line-height:21.60px;transform:scaleX(0.8906);transform-origin:0 0;color:#363636;-webkit-text-stroke:0;">1</div>
<div class="a" style="left:932.92px;top:275.37px;font-size:13.5px;line-height:21.60px;transform:scaleX(0.8906);transform-origin:0 0;color:#363636;-webkit-text-stroke:0;">145862</div>
<div class="a" style="left:978.30px;top:276.37px;font-size:13px;line-height:20.80px;transform:scaleX(0.9410);transform-origin:0 0;color:#363636;-webkit-text-stroke:0;">未対応</div>
<div class="a" style="left:28.00px;top:292.13px;font-size:13.5px;line-height:21.60px;transform:scaleX(0.8906);transform-origin:0 0;color:#363636;-webkit-text-stroke:0;">#990000</div>
<div class="a" style="left:540.27px;top:292.13px;font-size:13.5px;line-height:21.60px;transform:scaleX(0.8906);transform-origin:0 0;color:#363636;-webkit-text-stroke:0;">1</div>
<div class="a" style="left:728.57px;top:292.13px;font-size:13.5px;line-height:21.60px;transform:scaleX(0.8906);transform-origin:0 0;color:#363636;-webkit-text-stroke:0;">1</div>
<div class="a" style="left:932.92px;top:292.13px;font-size:13.5px;line-height:21.60px;transform:scaleX(0.8906);transform-origin:0 0;color:#363636;-webkit-text-stroke:0;">145862</div>
<div class="a" style="left:978.30px;top:293.13px;font-size:13px;line-height:20.80px;transform:scaleX(0.9410);transform-origin:0 0;color:#363636;-webkit-text-stroke:0;">未対応</div>
<div class="a" style="left:28.00px;top:308.89px;font-size:13.5px;line-height:21.60px;transform:scaleX(0.9378);transform-origin:0 0;color:#363636;-webkit-text-stroke:0;">#ff9200</div>
<div class="a" style="left:540.27px;top:308.89px;font-size:13.5px;line-height:21.60px;transform:scaleX(0.8906);transform-origin:0 0;color:#363636;-webkit-text-stroke:0;">2</div>
<div class="a" style="left:728.57px;top:308.89px;font-size:13.5px;line-height:21.60px;transform:scaleX(0.8906);transform-origin:0 0;color:#363636;-webkit-text-stroke:0;">1</div>
<div class="a" style="left:932.92px;top:308.89px;font-size:13.5px;line-height:21.60px;transform:scaleX(0.8906);transform-origin:0 0;color:#363636;-webkit-text-stroke:0;">145862</div>
<div class="a" style="left:978.30px;top:309.89px;font-size:13px;line-height:20.80px;transform:scaleX(0.9410);transform-origin:0 0;color:#363636;-webkit-text-stroke:0;">未対応</div>
<div class="a" style="left:28.00px;top:325.65px;font-size:13.5px;line-height:21.60px;transform:scaleX(0.8925);transform-origin:0 0;color:#363636;-webkit-text-stroke:0;">#7ea800</div>
<div class="a" style="left:539.38px;top:325.65px;font-size:13.5px;line-height:21.60px;transform:scaleX(0.8906);transform-origin:0 0;color:#363636;-webkit-text-stroke:0;">0</div>
<div class="a" style="left:728.57px;top:325.65px;font-size:13.5px;line-height:21.60px;transform:scaleX(0.8906);transform-origin:0 0;color:#363636;-webkit-text-stroke:0;">1</div>
<div class="a" style="left:932.92px;top:325.65px;font-size:13.5px;line-height:21.60px;transform:scaleX(0.8906);transform-origin:0 0;color:#363636;-webkit-text-stroke:0;">145862</div>
<div class="a" style="left:978.30px;top:326.65px;font-size:13px;line-height:20.80px;transform:scaleX(0.9410);transform-origin:0 0;color:#363636;-webkit-text-stroke:0;">未対応</div>
<div class="a" style="left:28.00px;top:342.41px;font-size:13.5px;line-height:21.60px;transform:scaleX(0.9378);transform-origin:0 0;color:#363636;-webkit-text-stroke:0;">#ff9200</div>
<div class="a" style="left:540.27px;top:342.41px;font-size:13.5px;line-height:21.60px;transform:scaleX(0.8906);transform-origin:0 0;color:#363636;-webkit-text-stroke:0;">2</div>
<div class="a" style="left:728.57px;top:342.41px;font-size:13.5px;line-height:21.60px;transform:scaleX(0.8906);transform-origin:0 0;color:#363636;-webkit-text-stroke:0;">1</div>
<div class="a" style="left:932.92px;top:342.41px;font-size:13.5px;line-height:21.60px;transform:scaleX(0.8906);transform-origin:0 0;color:#363636;-webkit-text-stroke:0;">145862</div>
<div class="a" style="left:978.30px;top:343.41px;font-size:13px;line-height:20.80px;transform:scaleX(0.9410);transform-origin:0 0;color:#363636;-webkit-text-stroke:0;">未対応</div>
<div class="a" style="left:28.00px;top:359.17px;font-size:13.5px;line-height:21.60px;transform:scaleX(0.9019);transform-origin:0 0;color:#363636;-webkit-text-stroke:0;">#2779ca</div>
<div class="a" style="left:540.27px;top:359.17px;font-size:13.5px;line-height:21.60px;transform:scaleX(0.8906);transform-origin:0 0;color:#363636;-webkit-text-stroke:0;">3</div>
<div class="a" style="left:728.57px;top:359.17px;font-size:13.5px;line-height:21.60px;transform:scaleX(0.8906);transform-origin:0 0;color:#363636;-webkit-text-stroke:0;">1</div>
<div class="a" style="left:932.92px;top:359.17px;font-size:13.5px;line-height:21.60px;transform:scaleX(0.8906);transform-origin:0 0;color:#363636;-webkit-text-stroke:0;">145862</div>
<div class="a" style="left:978.30px;top:360.17px;font-size:13px;line-height:20.80px;transform:scaleX(0.9410);transform-origin:0 0;color:#363636;-webkit-text-stroke:0;">未対応</div>
<div class="a" style="left:28.00px;top:375.93px;font-size:13.5px;line-height:21.60px;transform:scaleX(0.9378);transform-origin:0 0;color:#363636;-webkit-text-stroke:0;">#ff9200</div>
<div class="a" style="left:540.27px;top:375.93px;font-size:13.5px;line-height:21.60px;transform:scaleX(0.8906);transform-origin:0 0;color:#363636;-webkit-text-stroke:0;">2</div>
<div class="a" style="left:728.57px;top:375.93px;font-size:13.5px;line-height:21.60px;transform:scaleX(0.8906);transform-origin:0 0;color:#363636;-webkit-text-stroke:0;">1</div>
<div class="a" style="left:932.92px;top:375.93px;font-size:13.5px;line-height:21.60px;transform:scaleX(0.8906);transform-origin:0 0;color:#363636;-webkit-text-stroke:0;">145862</div>
<div class="a" style="left:978.30px;top:376.93px;font-size:13px;line-height:20.80px;transform:scaleX(0.9410);transform-origin:0 0;color:#363636;-webkit-text-stroke:0;">未対応</div>
<div class="a" style="left:28.00px;top:392.69px;font-size:13.5px;line-height:21.60px;transform:scaleX(0.8925);transform-origin:0 0;color:#363636;-webkit-text-stroke:0;">#7ea800</div>
<div class="a" style="left:539.38px;top:392.69px;font-size:13.5px;line-height:21.60px;transform:scaleX(0.8906);transform-origin:0 0;color:#363636;-webkit-text-stroke:0;">0</div>
<div class="a" style="left:728.57px;top:392.69px;font-size:13.5px;line-height:21.60px;transform:scaleX(0.8906);transform-origin:0 0;color:#363636;-webkit-text-stroke:0;">1</div>
<div class="a" style="left:932.92px;top:392.69px;font-size:13.5px;line-height:21.60px;transform:scaleX(0.8906);transform-origin:0 0;color:#363636;-webkit-text-stroke:0;">145862</div>
<div class="a" style="left:978.30px;top:393.69px;font-size:13px;line-height:20.80px;transform:scaleX(0.9410);transform-origin:0 0;color:#363636;-webkit-text-stroke:0;">未対応</div>
<div class="a" style="left:28.00px;top:409.45px;font-size:13.5px;line-height:21.60px;transform:scaleX(0.9378);transform-origin:0 0;color:#363636;-webkit-text-stroke:0;">#ff9200</div>
<div class="a" style="left:540.27px;top:409.45px;font-size:13.5px;line-height:21.60px;transform:scaleX(0.8906);transform-origin:0 0;color:#363636;-webkit-text-stroke:0;">2</div>
<div class="a" style="left:728.57px;top:409.45px;font-size:13.5px;line-height:21.60px;transform:scaleX(0.8906);transform-origin:0 0;color:#363636;-webkit-text-stroke:0;">1</div>
<div class="a" style="left:932.92px;top:409.45px;font-size:13.5px;line-height:21.60px;transform:scaleX(0.8906);transform-origin:0 0;color:#363636;-webkit-text-stroke:0;">145862</div>
<div class="a" style="left:978.30px;top:410.45px;font-size:13px;line-height:20.80px;transform:scaleX(0.9410);transform-origin:0 0;color:#363636;-webkit-text-stroke:0;">未対応</div>
<div class="a" style="left:28.00px;top:426.21px;font-size:13.5px;line-height:21.60px;transform:scaleX(0.9019);transform-origin:0 0;color:#363636;-webkit-text-stroke:0;">#2779ca</div>
<div class="a" style="left:540.27px;top:426.21px;font-size:13.5px;line-height:21.60px;transform:scaleX(0.8906);transform-origin:0 0;color:#363636;-webkit-text-stroke:0;">3</div>
<div class="a" style="left:728.57px;top:426.21px;font-size:13.5px;line-height:21.60px;transform:scaleX(0.8906);transform-origin:0 0;color:#363636;-webkit-text-stroke:0;">1</div>
<div class="a" style="left:932.92px;top:426.21px;font-size:13.5px;line-height:21.60px;transform:scaleX(0.8906);transform-origin:0 0;color:#363636;-webkit-text-stroke:0;">145862</div>
<div class="a" style="left:978.30px;top:427.21px;font-size:13px;line-height:20.80px;transform:scaleX(0.9410);transform-origin:0 0;color:#363636;-webkit-text-stroke:0;">未対応</div>
<div class="a" style="left:28.00px;top:442.97px;font-size:13.5px;line-height:21.60px;transform:scaleX(0.9378);transform-origin:0 0;color:#363636;-webkit-text-stroke:0;">#ff9200</div>
<div class="a" style="left:540.27px;top:442.97px;font-size:13.5px;line-height:21.60px;transform:scaleX(0.8906);transform-origin:0 0;color:#363636;-webkit-text-stroke:0;">2</div>
<div class="a" style="left:728.57px;top:442.97px;font-size:13.5px;line-height:21.60px;transform:scaleX(0.8906);transform-origin:0 0;color:#363636;-webkit-text-stroke:0;">1</div>
<div class="a" style="left:932.92px;top:442.97px;font-size:13.5px;line-height:21.60px;transform:scaleX(0.8906);transform-origin:0 0;color:#363636;-webkit-text-stroke:0;">145862</div>
<div class="a" style="left:978.30px;top:443.97px;font-size:13px;line-height:20.80px;transform:scaleX(0.9410);transform-origin:0 0;color:#363636;-webkit-text-stroke:0;">未対応</div>
<div class="a" style="left:28.00px;top:459.73px;font-size:13.5px;line-height:21.60px;transform:scaleX(0.8925);transform-origin:0 0;color:#363636;-webkit-text-stroke:0;">#7ea800</div>
<div class="a" style="left:539.38px;top:459.73px;font-size:13.5px;line-height:21.60px;transform:scaleX(0.8906);transform-origin:0 0;color:#363636;-webkit-text-stroke:0;">0</div>
<div class="a" style="left:728.57px;top:459.73px;font-size:13.5px;line-height:21.60px;transform:scaleX(0.8906);transform-origin:0 0;color:#363636;-webkit-text-stroke:0;">1</div>
<div class="a" style="left:932.92px;top:459.73px;font-size:13.5px;line-height:21.60px;transform:scaleX(0.8906);transform-origin:0 0;color:#363636;-webkit-text-stroke:0;">145862</div>
<div class="a" style="left:978.30px;top:460.73px;font-size:13px;line-height:20.80px;transform:scaleX(0.9410);transform-origin:0 0;color:#363636;-webkit-text-stroke:0;">未対応</div>
<div class="a" style="left:28.00px;top:476.49px;font-size:13.5px;line-height:21.60px;transform:scaleX(0.9378);transform-origin:0 0;color:#363636;-webkit-text-stroke:0;">#ff9200</div>
<div class="a" style="left:540.27px;top:476.49px;font-size:13.5px;line-height:21.60px;transform:scaleX(0.8906);transform-origin:0 0;color:#363636;-webkit-text-stroke:0;">2</div>
<div class="a" style="left:728.57px;top:476.49px;font-size:13.5px;line-height:21.60px;transform:scaleX(0.8906);transform-origin:0 0;color:#363636;-webkit-text-stroke:0;">1</div>
<div class="a" style="left:932.92px;top:476.49px;font-size:13.5px;line-height:21.60px;transform:scaleX(0.8906);transform-origin:0 0;color:#363636;-webkit-text-stroke:0;">145862</div>
<div class="a" style="left:978.30px;top:477.49px;font-size:13px;line-height:20.80px;transform:scaleX(0.9410);transform-origin:0 0;color:#363636;-webkit-text-stroke:0;">未対応</div>
<div class="a" style="left:28.00px;top:493.25px;font-size:13.5px;line-height:21.60px;transform:scaleX(0.9019);transform-origin:0 0;color:#363636;-webkit-text-stroke:0;">#2779ca</div>
<div class="a" style="left:540.27px;top:493.25px;font-size:13.5px;line-height:21.60px;transform:scaleX(0.8906);transform-origin:0 0;color:#363636;-webkit-text-stroke:0;">3</div>
<div class="a" style="left:728.57px;top:493.25px;font-size:13.5px;line-height:21.60px;transform:scaleX(0.8906);transform-origin:0 0;color:#363636;-webkit-text-stroke:0;">1</div>
<div class="a" style="left:932.92px;top:493.25px;font-size:13.5px;line-height:21.60px;transform:scaleX(0.8906);transform-origin:0 0;color:#363636;-webkit-text-stroke:0;">145862</div>
<div class="a" style="left:978.30px;top:494.25px;font-size:13px;line-height:20.80px;transform:scaleX(0.9410);transform-origin:0 0;color:#363636;-webkit-text-stroke:0;">未対応</div>
<div class="a" style="left:28.00px;top:510.01px;font-size:13.5px;line-height:21.60px;transform:scaleX(0.9378);transform-origin:0 0;color:#363636;-webkit-text-stroke:0;">#ff9200</div>
<div class="a" style="left:540.27px;top:510.01px;font-size:13.5px;line-height:21.60px;transform:scaleX(0.8906);transform-origin:0 0;color:#363636;-webkit-text-stroke:0;">2</div>
<div class="a" style="left:728.57px;top:510.01px;font-size:13.5px;line-height:21.60px;transform:scaleX(0.8906);transform-origin:0 0;color:#363636;-webkit-text-stroke:0;">1</div>
<div class="a" style="left:932.92px;top:510.01px;font-size:13.5px;line-height:21.60px;transform:scaleX(0.8906);transform-origin:0 0;color:#363636;-webkit-text-stroke:0;">145862</div>
<div class="a" style="left:978.30px;top:511.01px;font-size:13px;line-height:20.80px;transform:scaleX(0.9410);transform-origin:0 0;color:#363636;-webkit-text-stroke:0;">未対応</div>
<div class="a" style="left:28.00px;top:526.77px;font-size:13.5px;line-height:21.60px;transform:scaleX(0.8925);transform-origin:0 0;color:#363636;-webkit-text-stroke:0;">#7ea800</div>
<div class="a" style="left:539.38px;top:526.77px;font-size:13.5px;line-height:21.60px;transform:scaleX(0.8906);transform-origin:0 0;color:#363636;-webkit-text-stroke:0;">0</div>
<div class="a" style="left:728.57px;top:526.77px;font-size:13.5px;line-height:21.60px;transform:scaleX(0.8906);transform-origin:0 0;color:#363636;-webkit-text-stroke:0;">1</div>
<div class="a" style="left:932.92px;top:526.77px;font-size:13.5px;line-height:21.60px;transform:scaleX(0.8906);transform-origin:0 0;color:#363636;-webkit-text-stroke:0;">145862</div>
<div class="a" style="left:978.30px;top:527.77px;font-size:13px;line-height:20.80px;transform:scaleX(0.9410);transform-origin:0 0;color:#363636;-webkit-text-stroke:0;">未対応</div>
<div class="a" style="left:28.00px;top:543.53px;font-size:13.5px;line-height:21.60px;transform:scaleX(0.9378);transform-origin:0 0;color:#363636;-webkit-text-stroke:0;">#ff9200</div>
<div class="a" style="left:540.27px;top:543.53px;font-size:13.5px;line-height:21.60px;transform:scaleX(0.8906);transform-origin:0 0;color:#363636;-webkit-text-stroke:0;">2</div>
<div class="a" style="left:728.57px;top:543.53px;font-size:13.5px;line-height:21.60px;transform:scaleX(0.8906);transform-origin:0 0;color:#363636;-webkit-text-stroke:0;">1</div>
<div class="a" style="left:932.92px;top:543.53px;font-size:13.5px;line-height:21.60px;transform:scaleX(0.8906);transform-origin:0 0;color:#363636;-webkit-text-stroke:0;">145862</div>
<div class="a" style="left:978.30px;top:544.53px;font-size:13px;line-height:20.80px;transform:scaleX(0.9410);transform-origin:0 0;color:#363636;-webkit-text-stroke:0;">未対応</div>
<div class="a" style="left:28.00px;top:560.29px;font-size:13.5px;line-height:21.60px;transform:scaleX(0.9019);transform-origin:0 0;color:#363636;-webkit-text-stroke:0;">#2779ca</div>
<div class="a" style="left:540.27px;top:560.29px;font-size:13.5px;line-height:21.60px;transform:scaleX(0.8906);transform-origin:0 0;color:#363636;-webkit-text-stroke:0;">3</div>
<div class="a" style="left:728.57px;top:560.29px;font-size:13.5px;line-height:21.60px;transform:scaleX(0.8906);transform-origin:0 0;color:#363636;-webkit-text-stroke:0;">1</div>
<div class="a" style="left:932.92px;top:560.29px;font-size:13.5px;line-height:21.60px;transform:scaleX(0.8906);transform-origin:0 0;color:#363636;-webkit-text-stroke:0;">145862</div>
<div class="a" style="left:978.30px;top:561.29px;font-size:13px;line-height:20.80px;transform:scaleX(0.9410);transform-origin:0 0;color:#363636;-webkit-text-stroke:0;">未対応</div>
<div class="a" style="left:28.00px;top:577.05px;font-size:13.5px;line-height:21.60px;transform:scaleX(0.9378);transform-origin:0 0;color:#363636;-webkit-text-stroke:0;">#ff9200</div>
<div class="a" style="left:540.27px;top:577.05px;font-size:13.5px;line-height:21.60px;transform:scaleX(0.8906);transform-origin:0 0;color:#363636;-webkit-text-stroke:0;">2</div>
<div class="a" style="left:728.57px;top:577.05px;font-size:13.5px;line-height:21.60px;transform:scaleX(0.8906);transform-origin:0 0;color:#363636;-webkit-text-stroke:0;">1</div>
<div class="a" style="left:932.92px;top:577.05px;font-size:13.5px;line-height:21.60px;transform:scaleX(0.8906);transform-origin:0 0;color:#363636;-webkit-text-stroke:0;">145862</div>
<div class="a" style="left:978.30px;top:578.05px;font-size:13px;line-height:20.80px;transform:scaleX(0.9410);transform-origin:0 0;color:#363636;-webkit-text-stroke:0;">未対応</div>
<div class="a" style="left:28.00px;top:593.81px;font-size:13.5px;line-height:21.60px;transform:scaleX(0.8925);transform-origin:0 0;color:#363636;-webkit-text-stroke:0;">#7ea800</div>
<div class="a" style="left:539.38px;top:593.81px;font-size:13.5px;line-height:21.60px;transform:scaleX(0.8906);transform-origin:0 0;color:#363636;-webkit-text-stroke:0;">0</div>
<div class="a" style="left:728.57px;top:593.81px;font-size:13.5px;line-height:21.60px;transform:scaleX(0.8906);transform-origin:0 0;color:#363636;-webkit-text-stroke:0;">1</div>
<div class="a" style="left:932.92px;top:593.81px;font-size:13.5px;line-height:21.60px;transform:scaleX(0.8906);transform-origin:0 0;color:#363636;-webkit-text-stroke:0;">145862</div>
<div class="a" style="left:978.30px;top:594.81px;font-size:13px;line-height:20.80px;transform:scaleX(0.9410);transform-origin:0 0;color:#363636;-webkit-text-stroke:0;">未対応</div>
<div class="a" style="left:28.00px;top:610.57px;font-size:13.5px;line-height:21.60px;transform:scaleX(0.9378);transform-origin:0 0;color:#363636;-webkit-text-stroke:0;">#ff9200</div>
<div class="a" style="left:540.27px;top:610.57px;font-size:13.5px;line-height:21.60px;transform:scaleX(0.8906);transform-origin:0 0;color:#363636;-webkit-text-stroke:0;">2</div>
<div class="a" style="left:728.57px;top:610.57px;font-size:13.5px;line-height:21.60px;transform:scaleX(0.8906);transform-origin:0 0;color:#363636;-webkit-text-stroke:0;">1</div>
<div class="a" style="left:932.92px;top:610.57px;font-size:13.5px;line-height:21.60px;transform:scaleX(0.8906);transform-origin:0 0;color:#363636;-webkit-text-stroke:0;">145862</div>
<div class="a" style="left:978.30px;top:611.57px;font-size:13px;line-height:20.80px;transform:scaleX(0.9410);transform-origin:0 0;color:#363636;-webkit-text-stroke:0;">未対応</div>
<div class="a" style="left:28.00px;top:627.33px;font-size:13.5px;line-height:21.60px;transform:scaleX(0.9019);transform-origin:0 0;color:#363636;-webkit-text-stroke:0;">#2779ca</div>
<div class="a" style="left:540.27px;top:627.33px;font-size:13.5px;line-height:21.60px;transform:scaleX(0.8906);transform-origin:0 0;color:#363636;-webkit-text-stroke:0;">3</div>
<div class="a" style="left:728.57px;top:627.33px;font-size:13.5px;line-height:21.60px;transform:scaleX(0.8906);transform-origin:0 0;color:#363636;-webkit-text-stroke:0;">1</div>
<div class="a" style="left:932.92px;top:627.33px;font-size:13.5px;line-height:21.60px;transform:scaleX(0.8906);transform-origin:0 0;color:#363636;-webkit-text-stroke:0;">145862</div>
<div class="a" style="left:978.30px;top:628.33px;font-size:13px;line-height:20.80px;transform:scaleX(0.9410);transform-origin:0 0;color:#363636;-webkit-text-stroke:0;">未対応</div>
<div class="a" style="left:28.00px;top:644.09px;font-size:13.5px;line-height:21.60px;transform:scaleX(0.9378);transform-origin:0 0;color:#363636;-webkit-text-stroke:0;">#ff9200</div>
<div class="a" style="left:540.27px;top:644.09px;font-size:13.5px;line-height:21.60px;transform:scaleX(0.8906);transform-origin:0 0;color:#363636;-webkit-text-stroke:0;">2</div>
<div class="a" style="left:728.57px;top:644.09px;font-size:13.5px;line-height:21.60px;transform:scaleX(0.8906);transform-origin:0 0;color:#363636;-webkit-text-stroke:0;">1</div>
<div class="a" style="left:932.92px;top:644.09px;font-size:13.5px;line-height:21.60px;transform:scaleX(0.8906);transform-origin:0 0;color:#363636;-webkit-text-stroke:0;">145862</div>
<div class="a" style="left:978.30px;top:645.09px;font-size:13px;line-height:20.80px;transform:scaleX(0.9410);transform-origin:0 0;color:#363636;-webkit-text-stroke:0;">未対応</div>
<div class="a" style="left:28.00px;top:660.85px;font-size:13.5px;line-height:21.60px;transform:scaleX(0.8925);transform-origin:0 0;color:#363636;-webkit-text-stroke:0;">#7ea800</div>
<div class="a" style="left:539.38px;top:660.85px;font-size:13.5px;line-height:21.60px;transform:scaleX(0.8906);transform-origin:0 0;color:#363636;-webkit-text-stroke:0;">0</div>
<div class="a" style="left:728.57px;top:660.85px;font-size:13.5px;line-height:21.60px;transform:scaleX(0.8906);transform-origin:0 0;color:#363636;-webkit-text-stroke:0;">1</div>
<div class="a" style="left:932.92px;top:660.85px;font-size:13.5px;line-height:21.60px;transform:scaleX(0.8906);transform-origin:0 0;color:#363636;-webkit-text-stroke:0;">145862</div>
<div class="a" style="left:978.30px;top:661.85px;font-size:13px;line-height:20.80px;transform:scaleX(0.9410);transform-origin:0 0;color:#363636;-webkit-text-stroke:0;">未対応</div>
<div class="a" style="left:28.00px;top:677.61px;font-size:13.5px;line-height:21.60px;transform:scaleX(0.9378);transform-origin:0 0;color:#363636;-webkit-text-stroke:0;">#ff9200</div>
<div class="a" style="left:540.27px;top:677.61px;font-size:13.5px;line-height:21.60px;transform:scaleX(0.8906);transform-origin:0 0;color:#363636;-webkit-text-stroke:0;">2</div>
<div class="a" style="left:728.57px;top:677.61px;font-size:13.5px;line-height:21.60px;transform:scaleX(0.8906);transform-origin:0 0;color:#363636;-webkit-text-stroke:0;">1</div>
<div class="a" style="left:932.92px;top:677.61px;font-size:13.5px;line-height:21.60px;transform:scaleX(0.8906);transform-origin:0 0;color:#363636;-webkit-text-stroke:0;">145862</div>
<div class="a" style="left:978.30px;top:678.61px;font-size:13px;line-height:20.80px;transform:scaleX(0.9410);transform-origin:0 0;color:#363636;-webkit-text-stroke:0;">未対応</div>
<div class="a" style="left:28.00px;top:694.37px;font-size:13.5px;line-height:21.60px;transform:scaleX(0.9019);transform-origin:0 0;color:#363636;-webkit-text-stroke:0;">#2779ca</div>
<div class="a" style="left:540.27px;top:694.37px;font-size:13.5px;line-height:21.60px;transform:scaleX(0.8906);transform-origin:0 0;color:#363636;-webkit-text-stroke:0;">3</div>
<div class="a" style="left:728.57px;top:694.37px;font-size:13.5px;line-height:21.60px;transform:scaleX(0.8906);transform-origin:0 0;color:#363636;-webkit-text-stroke:0;">1</div>
<div class="a" style="left:932.92px;top:694.37px;font-size:13.5px;line-height:21.60px;transform:scaleX(0.8906);transform-origin:0 0;color:#363636;-webkit-text-stroke:0;">145862</div>
<div class="a" style="left:978.30px;top:695.37px;font-size:13px;line-height:20.80px;transform:scaleX(0.9410);transform-origin:0 0;color:#363636;-webkit-text-stroke:0;">未対応</div>
<div class="a" style="left:25.5px;top:713.68px;width:1163.0px;height:5.32px;overflow:hidden">
<div class="a" style="left:2.50px;top:-2.55px;font-size:13.5px;line-height:21.60px;transform:scaleX(0.9378);transform-origin:0 0;color:#363636;-webkit-text-stroke:0;">#ff9200</div>
<div class="a" style="left:514.77px;top:-2.55px;font-size:13.5px;line-height:21.60px;transform:scaleX(0.8906);transform-origin:0 0;color:#363636;-webkit-text-stroke:0;">2</div>
<div class="a" style="left:703.07px;top:-2.55px;font-size:13.5px;line-height:21.60px;transform:scaleX(0.8906);transform-origin:0 0;color:#363636;-webkit-text-stroke:0;">1</div>
<div class="a" style="left:907.42px;top:-2.55px;font-size:13.5px;line-height:21.60px;transform:scaleX(0.8906);transform-origin:0 0;color:#363636;-webkit-text-stroke:0;">145862</div>
<div class="a" style="left:952.80px;top:-1.55px;font-size:13px;line-height:20.80px;transform:scaleX(0.9410);transform-origin:0 0;color:#363636;-webkit-text-stroke:0;">未対応</div>
</div>
<div class="a" style="left:28.00px;top:727.89px;font-size:13.5px;line-height:21.60px;transform:scaleX(0.9378);transform-origin:0 0;color:#363636;-webkit-text-stroke:0;">#ff9200</div>
<div class="a" style="left:540.27px;top:727.89px;font-size:13.5px;line-height:21.60px;transform:scaleX(0.8906);transform-origin:0 0;color:#363636;-webkit-text-stroke:0;">2</div>
<div class="a" style="left:728.57px;top:727.89px;font-size:13.5px;line-height:21.60px;transform:scaleX(0.8906);transform-origin:0 0;color:#363636;-webkit-text-stroke:0;">1</div>
<div class="a" style="left:932.92px;top:727.89px;font-size:13.5px;line-height:21.60px;transform:scaleX(0.8906);transform-origin:0 0;color:#363636;-webkit-text-stroke:0;">145862</div>
<div class="a" style="left:978.30px;top:728.89px;font-size:13px;line-height:20.80px;transform:scaleX(0.9410);transform-origin:0 0;color:#363636;-webkit-text-stroke:0;">未対応</div>
<div class="a" style="left:1188.3px;top:244px;width:1.2px;height:475px;background:#b8b8b8"></div>
<div class="a" style="left:1191.5px;top:226px;width:9px;height:494px;background:#dadada"></div>
<div class="a" style="left:1192px;top:226.3px;width:10px;height:12px;background:#fff;border:1px solid #c6c6c6"></div>
<div class="a" style="left:1194.5px;top:229.5px;border-left:4px solid transparent;border-right:4px solid transparent;border-bottom:4px solid #666"></div>
<div class="a" style="left:1192px;top:238.5px;width:10px;height:14px;background:#fff;border:1px solid #c6c6c6"></div>
<div class="a" style="left:1192px;top:707.5px;width:10px;height:12px;background:#fff;border:1px solid #c6c6c6"></div>
<div class="a" style="left:1194.5px;top:711.5px;border-left:4px solid transparent;border-right:4px solid transparent;border-top:4px solid #666"></div>
<div class="a" style="left:2px;top:719px;width:1198px;height:23px;background:#e6e6e6;border-top:1px solid #c6c6c6"></div>
<div class="a" style="left:26px;top:726.5px;border-top:4px solid transparent;border-bottom:4px solid transparent;border-right:4px solid #c0c0c0"></div>
<div class="a" style="left:49px;top:726.5px;border-top:4px solid transparent;border-bottom:4px solid transparent;border-left:4px solid #c0c0c0"></div>
<div class="a" style="left:85.5px;top:723px;width:1px;height:15px;background:#c0c0c0"></div>
<div class="a" style="left:97.30px;top:720.05px;font-size:12.5px;line-height:20.00px;transform:scaleX(0.9350);transform-origin:0 0;color:#444;">Sheet4</div>
<div class="a" style="left:146.5px;top:719px;width:68px;height:21px;background:#fff;border-left:1px solid #c6c6c6;border-right:1px solid #c6c6c6;border-bottom:2px solid #217346"></div>
<div class="a" style="left:157.02px;top:719.90px;font-size:12.5px;line-height:20.00px;transform:scaleX(0.9773);transform-origin:0 0;color:#217346;">Projects</div>
<div class="a" style="left:225.00px;top:720.05px;font-size:12.5px;line-height:20.00px;transform:scaleX(0.9250);transform-origin:0 0;color:#444;">Sheet1</div>
<div class="a" style="left:274px;top:723px;width:1px;height:15px;background:#c0c0c0"></div>
<svg class="a" style="left:301px;top:722px" width="16" height="16" viewBox="0 0 16 16"><circle cx="8" cy="8" r="6.5" fill="none" stroke="#707070" stroke-width="1.1"/><path d="M8 4.5v7M4.5 8h7" stroke="#707070" stroke-width="1.1"/></svg>
<div class="a" style="left:725px;top:726px;width:1.2px;height:9px;background:repeating-linear-gradient(#999 0 1.2px,transparent 1.2px 3.5px)"></div>
<div class="a" style="left:751.5px;top:724.5px;width:437px;height:12px;background:#dadada"></div>
<div class="a" style="left:739.3px;top:724.3px;width:12.5px;height:12.5px;background:#fff;border:1px solid #c6c6c6"></div>
<div class="a" style="left:743px;top:727px;border-top:3.5px solid transparent;border-bottom:3.5px solid transparent;border-right:4px solid #555"></div>
<div class="a" style="left:1031.7px;top:724.7px;width:47.5px;height:11.7px;background:#fff;border:1px solid #c6c6c6"></div>
<div class="a" style="left:1176.5px;top:724.3px;width:12.5px;height:12.5px;background:#fff;border:1px solid #c6c6c6"></div>
<div class="a" style="left:1181px;top:727px;border-top:3.5px solid transparent;border-bottom:3.5px solid transparent;border-left:4px solid #555"></div>
<div class="a" style="left:0;top:742px;width:1200px;height:16px;background:#f3f2f1;border-top:1px solid #d6d6d6"></div>
<div class="a" style="left:8.60px;top:741.20px;font-size:11.5px;line-height:18.40px;transform:scaleX(0.9412);transform-origin:0 0;color:#555;">Create</div>
<div class="a" style="left:44.40px;top:741.85px;font-size:11.5px;line-height:18.40px;transform:scaleX(0.9857);transform-origin:0 0;color:#555;">完了。</div>
<div class="a" style="left:74.15px;top:741.85px;font-size:11.5px;line-height:18.40px;transform:scaleX(0.8490);transform-origin:0 0;color:#555;">1010行が</div>
<div class="a" style="left:119.23px;top:741.85px;font-size:11.5px;line-height:18.40px;transform:scaleX(0.7699);transform-origin:0 0;color:#555;">1.94秒で取得されました。</div>
<svg class="a" style="left:870px;top:745px" width="12" height="12" viewBox="0 0 12 12"><path d="M5 8.5h-4v-7h9v3" fill="none" stroke="#444" stroke-width="1.1"/><circle cx="8" cy="8.5" r="2.5" fill="none" stroke="#444" stroke-width="1.2"/></svg>
<div class="a" style="left:885.00px;top:742.00px;font-size:11.5px;line-height:18.40px;transform:scaleX(0.8511);transform-origin:0 0;color:#444;">表示設定</div>
<div class="a" style="left:941px;top:742.5px;width:33px;height:15.5px;background:#c8c6c4"></div>
<svg class="a" style="left:951.5px;top:744.5px" width="13" height="12" viewBox="0 0 13 12"><path d="M1 1h10.5v10h-10.5zM1 4.3h10.5M1 7.6h10.5M4.5 1v10M8 1v10" fill="none" stroke="#333" stroke-width="1"/></svg>
<svg class="a" style="left:985px;top:744.5px" width="13" height="12" viewBox="0 0 13 12"><rect x="1" y="1" width="10.5" height="10" fill="none" stroke="#666" stroke-width="1"/><rect x="3.5" y="3" width="5.5" height="6" fill="none" stroke="#666" stroke-width="0.9"/><path d="M5 5h2.5M5 7h2.5" stroke="#888" stroke-width="0.8"/></svg>
<svg class="a" style="left:1019px;top:744.5px" width="13" height="12" viewBox="0 0 13 12"><path d="M1 1h10.5v10h-10.5zM1 6.5h7v-5.5M4.5 1v5.5" fill="none" stroke="#555" stroke-width="1"/></svg>
<div class="a" style="left:1046px;top:750px;width:7px;height:1px;background:#555"></div>
<div class="a" style="left:1058px;top:750px;width:83px;height:1px;background:#999"></div>
<div class="a" style="left:1098.5px;top:746px;width:3.5px;height:10px;background:#666"></div>
<div class="a" style="left:1144px;top:750px;width:9px;height:1px;background:#555"></div>
<div class="a" style="left:1148px;top:746px;width:1px;height:9px;background:#555"></div>
<div class="a" style="left:1162.07px;top:742.00px;font-size:11.5px;line-height:18.40px;transform:scaleX(0.9310);transform-origin:0 0;color:#444;">100%</div>
<div class="a" style="left:0;top:0;width:1200px;height:3px;background:#484644"></div>
<div class="a" style="left:0;top:3px;width:1px;height:755px;background:#26322b"></div>
<div class="a" style="left:1px;top:32px;width:1px;height:726px;background:#217346"></div>
</body></html>
